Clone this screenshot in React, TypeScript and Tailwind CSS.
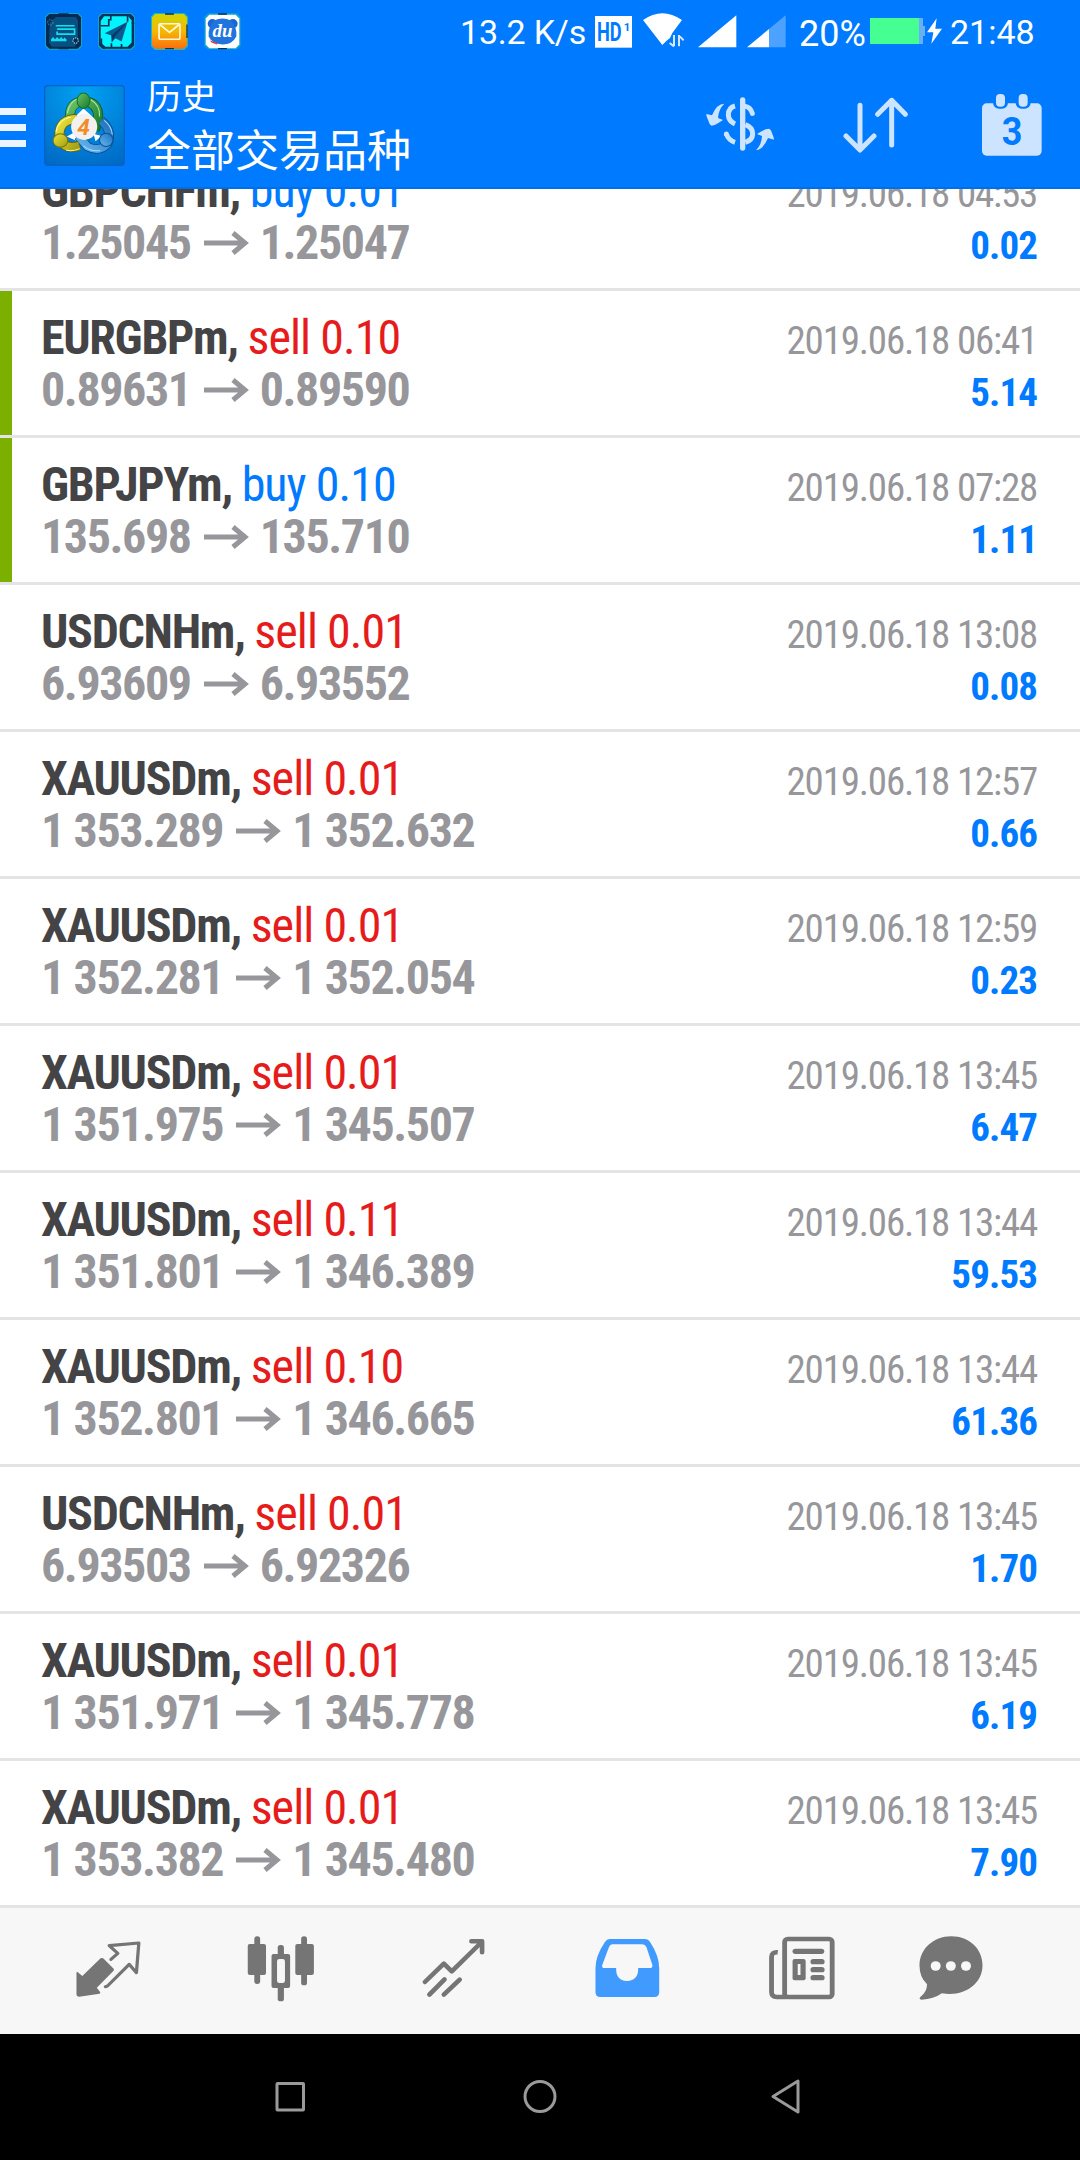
import React from 'react';

interface Deal {
  symbol: string;
  side: 'buy' | 'sell';
  volume: string;
  open: string;
  close: string;
  time: string;
  profit: string;
  marked?: boolean;
}

const DEALS: Deal[] = [
  { symbol: 'GBPCHFm', side: 'buy', volume: '0.01', open: '1.25045', close: '1.25047', time: '2019.06.18 04:53', profit: '0.02' },
  { symbol: 'EURGBPm', side: 'sell', volume: '0.10', open: '0.89631', close: '0.89590', time: '2019.06.18 06:41', profit: '5.14', marked: true },
  { symbol: 'GBPJPYm', side: 'buy', volume: '0.10', open: '135.698', close: '135.710', time: '2019.06.18 07:28', profit: '1.11', marked: true },
  { symbol: 'USDCNHm', side: 'sell', volume: '0.01', open: '6.93609', close: '6.93552', time: '2019.06.18 13:08', profit: '0.08' },
  { symbol: 'XAUUSDm', side: 'sell', volume: '0.01', open: '1 353.289', close: '1 352.632', time: '2019.06.18 12:57', profit: '0.66' },
  { symbol: 'XAUUSDm', side: 'sell', volume: '0.01', open: '1 352.281', close: '1 352.054', time: '2019.06.18 12:59', profit: '0.23' },
  { symbol: 'XAUUSDm', side: 'sell', volume: '0.01', open: '1 351.975', close: '1 345.507', time: '2019.06.18 13:45', profit: '6.47' },
  { symbol: 'XAUUSDm', side: 'sell', volume: '0.11', open: '1 351.801', close: '1 346.389', time: '2019.06.18 13:44', profit: '59.53' },
  { symbol: 'XAUUSDm', side: 'sell', volume: '0.10', open: '1 352.801', close: '1 346.665', time: '2019.06.18 13:44', profit: '61.36' },
  { symbol: 'USDCNHm', side: 'sell', volume: '0.01', open: '6.93503', close: '6.92326', time: '2019.06.18 13:45', profit: '1.70' },
  { symbol: 'XAUUSDm', side: 'sell', volume: '0.01', open: '1 351.971', close: '1 345.778', time: '2019.06.18 13:45', profit: '6.19' },
  { symbol: 'XAUUSDm', side: 'sell', volume: '0.01', open: '1 353.382', close: '1 345.480', time: '2019.06.18 13:45', profit: '7.90' },
];

const BADGE = 'M12 1H98L109 12V97L98 108H12L1 97V12Z';

const NotificationIcons = () => (
  <div className="flex gap-4">
    <svg className="size-[37px]" viewBox="0 0 110 110">
      <path d={BADGE} fill="#06294f" stroke="#10a5c8" strokeWidth="4" />
      <path d="M14 30L32 12H92L98 22V86L88 100H20L12 88Z" fill="#075082" />
      <path d="M40 4H70M40 105H70" stroke="#042b52" strokeWidth="6" />
      <path d="M32 38H88M36 48H88V63H36V55" stroke="#12e0ee" strokeWidth="5" fill="none" />
      <path d="M18 84V78l6-7 6 7 6-7 6 7 6-7 6 7 4-5 6 6v5Z" fill="#13dfee" />
      <circle cx="91" cy="82" r="8" fill="#042b52" stroke="#a5e6f0" strokeWidth="3" strokeDasharray="4 3" />
      <circle cx="16" cy="28" r="8" fill="none" stroke="#5fb4d0" strokeWidth="2" strokeDasharray="5 3" />
    </svg>
    <svg className="size-[37px]" viewBox="0 0 110 110">
      <path d={BADGE} fill="#06315c" stroke="#10a5c8" strokeWidth="4" />
      <path d="M18 10H90L100 22V88L88 100H22L8 88V24Z" fill="#04f4fc" />
      <path d="M38 4v16h-6v18H8M88 4v22M100 30h8M40 90v14M70 92v14M10 76v20l10 10" stroke="#06315c" strokeWidth="5" fill="none" />
      <path d="M88 26L20 60L40 67L41 87L52 75L70 85Z" fill="#0b5a90" />
      <path d="M88 26L40 67L41 87L50 70Z" fill="#063a69" />
    </svg>
    <svg className="size-[37px]" viewBox="0 0 110 110">
      <defs>
        <linearGradient id="mail" x1="0" y1="0" x2="0" y2="1">
          <stop offset="0" stopColor="#cfd600" />
          <stop offset="0.5" stopColor="#f6b800" />
          <stop offset="1" stopColor="#ff6a10" />
        </linearGradient>
      </defs>
      <path d={BADGE} fill="url(#mail)" stroke="#25b6b4" strokeWidth="4" />
      <path d="M42 3H68M42 106H68M107 34V74" stroke="#06315c" strokeWidth="4" />
      <rect x="24" y="32" width="62" height="46" rx="4" fill="none" stroke="#fff7e0" strokeWidth="5" />
      <path d="M27 35L55 58L83 35" fill="none" stroke="#fff7e0" strokeWidth="5" />
    </svg>
    <svg className="size-[37px]" viewBox="0 0 110 110">
      <path d={BADGE} fill="#10a5c8" />
      <path d="M16 5H94L105 16V94L94 105H16L5 94V16Z" fill="#fff" />
      <path d="M42 3H68M42 106H68" stroke="#06315c" strokeWidth="4" />
      <circle cx="25" cy="32" r="14" fill="#1d66cf" />
      <circle cx="86" cy="32" r="14" fill="#1d66cf" />
      <path d="M30 22Q55 10 80 22Q100 45 96 70Q84 94 55 94Q24 92 14 70Q10 45 30 22Z" fill="#2173dd" />
      <path d="M18 82L40 90L38 94L22 88Z" fill="#e33" />
      <text x="55" y="72" textAnchor="middle" fontSize="56" fontWeight="bold" fontStyle="italic" fontFamily="Liberation Serif, serif" fill="#fff">du</text>
    </svg>
  </div>
);

const StatusBar = () => (
  <div className="flex h-[62px] pt-[13px] pl-[45px]">
    <NotificationIcons />
    <div className="ml-[219px] w-[135px] text-[34px] leading-[38px] tracking-[-0.2px] whitespace-nowrap">13.2 K/s</div>
    <svg className="mt-[3px] h-[32px] w-[37px]" viewBox="0 0 111 96">
      <rect width="111" height="95" fill="#fff" />
      <text x="6" y="75" fontSize="76" fontWeight="bold" textLength="74" lengthAdjust="spacingAndGlyphs" fill="#007aff">HD</text>
      <text x="86" y="44" fontSize="34" fontWeight="bold" fill="#007aff">1</text>
    </svg>
    <svg className="ml-[11px] h-[36px] w-[41px]" viewBox="0 0 123 108">
      <path d="M0 21Q58 -20 117 21L88 60L81 75L70 84L58 96Z" fill="#fff" />
      <path d="M93 64V98M93 98L80 88M108 64V98M108 66L122 80" transform="translate(0 2)" fill="none" stroke="#d6e8ff" strokeWidth="6" />
    </svg>
    <svg className="mt-[2px] ml-[14px] h-[33px] w-[39px]" viewBox="0 0 117 99">
      <path d="M0 97L115 1V97Z" fill="#fff" />
    </svg>
    <svg className="mt-[2px] ml-[10px] h-[33px] w-[39px]" viewBox="0 0 117 99">
      <path d="M66 42L116 1V97H66Z" fill="#4da2ff" />
      <path d="M0 97L66 42V97Z" fill="#fff" />
    </svg>
    <div className="ml-[13px] w-[71px] text-[36px] leading-[42px] whitespace-nowrap">20%</div>
    <svg className="mt-[5px] h-[26px] w-[55px]" viewBox="0 0 55 26">
      <rect width="49" height="26" fill="#45ff93" />
      <path d="M49 0h4v8h2v10h-2v8h-4Z" fill="#6aaef5" />
    </svg>
    <svg className="mt-[5px] ml-[2px] h-[26px] w-[15px]" viewBox="0 0 45 78">
      <path d="M29 1L0 43H19L13 77L45 32H25Z" fill="#fff" />
    </svg>
    <div className="ml-[8px] text-[34px] leading-[38px] whitespace-nowrap">21:48</div>
  </div>
);

const AppLogo = () => (
  <svg className="size-[81px]" viewBox="132 256 242 242">
    <defs>
      <radialGradient id="tile" cx="0.5" cy="0.1" r="1">
        <stop offset="0" stopColor="#00a2f4" />
        <stop offset="1" stopColor="#0068c4" />
      </radialGradient>
      <linearGradient id="green" x1="0" y1="0" x2="1" y2="1">
        <stop offset="0" stopColor="#6cc468" />
        <stop offset="1" stopColor="#167a28" />
      </linearGradient>
      <linearGradient id="yellow" x1="0" y1="0" x2="1" y2="1">
        <stop offset="0" stopColor="#ebe43c" />
        <stop offset="1" stopColor="#a39c10" />
      </linearGradient>
      <linearGradient id="blue" x1="0" y1="1" x2="1" y2="0">
        <stop offset="0" stopColor="#6ab8f0" />
        <stop offset="1" stopColor="#1a70bc" />
      </linearGradient>
    </defs>
    <rect x="134" y="258" width="238" height="238" rx="10" fill="url(#tile)" stroke="#0a62c4" strokeWidth="4" />
    <path d="M156 262V492M180 262V492M204 262V492M228 262V492M276 262V492M300 262V492M324 262V492M348 262V492M138 290H368M138 320H368M138 350H368M138 405H368M138 435H368M138 465H368" stroke="#2a9ade" strokeOpacity="0.2" />
    {/* white gaps behind the three figures */}
    <path d="M226 350L250 326L276 350ZM200 410L222 398L232 424ZM280 402L304 408L286 424Z" fill="#fff" />
    <path d="M210 356Q206 308 250 304Q294 308 294 352L284 392" fill="none" stroke="#0f5c2a" strokeWidth="30" />
    <path d="M210 356Q206 308 250 304Q294 308 294 352L284 392" fill="none" stroke="url(#green)" strokeWidth="25" />
    <path d="M202 340Q208 306 232 298M272 300Q300 316 298 350" fill="none" stroke="#b4e6a8" strokeWidth="3" />
    <path d="M303 362Q338 392 322 432Q298 458 262 440L234 408" fill="none" stroke="#0a4c90" strokeWidth="28" />
    <path d="M303 362Q338 392 322 432Q298 458 262 440L234 408" fill="none" stroke="url(#blue)" strokeWidth="23" />
    <path d="M312 362Q334 380 336 404M300 452Q270 456 250 438" fill="none" stroke="#a8dcfa" strokeWidth="3" />
    <path d="M230 358Q176 358 178 408Q186 452 238 438" fill="none" stroke="#5f6414" strokeWidth="30" />
    <path d="M230 358Q176 358 178 408Q186 452 238 438" fill="none" stroke="url(#yellow)" strokeWidth="25" />
    <path d="M168 396Q174 360 212 352M198 450Q216 456 238 446" fill="none" stroke="#fdfbb0" strokeWidth="3" />
    <ellipse cx="250" cy="303" rx="19" ry="23" fill="url(#green)" stroke="#166f2b" strokeWidth="3" />
    <ellipse cx="181" cy="422" rx="22" ry="20" fill="url(#yellow)" stroke="#747510" strokeWidth="3" />
    <circle cx="318" cy="420" r="20" fill="url(#blue)" stroke="#0a5099" strokeWidth="3" />
    <circle cx="252" cy="381" r="39" fill="#f3f1ef" />
    <text x="250" y="405" textAnchor="middle" fontSize="68" fontWeight="bold" fontStyle="italic" fill="#f28c28">4</text>
  </svg>
);

const TitleBar = () => (
  <div className="flex h-[125px]">
    <div className="mt-[46px] flex w-[26px] flex-col gap-[9px]">
      <div className="h-[7px] bg-[#ebf4ff]" />
      <div className="h-[7px] bg-[#ebf4ff]" />
      <div className="h-[7px] bg-[#ebf4ff]" />
    </div>
    <div className="mt-[23px] ml-[18px]">
      <AppLogo />
    </div>
    <div className="ml-[22px] w-[559px] pt-[10px] font-['Noto_Sans_CJK_SC',sans-serif] whitespace-nowrap">
      <div className="text-[34.5px] leading-[44px]">历史</div>
      <div className="mt-1 text-[44px] leading-[56px]">全部交易品种</div>
    </div>
    <svg className="mt-[35px] h-[54px] w-[69px]" viewBox="798 292 207 162">
      <g fill="none" stroke="#cce4ff" strokeWidth="15" strokeLinecap="round">
        <path d="M908 301V445" strokeWidth="16" />
        <path d="M885 319Q865 324 865 346Q866 364 885 373" strokeLinecap="butt" />
        <path d="M916 320Q932 323 937 341" />
        <path d="M859 403Q866 422 885 428" strokeLinecap="butt" />
        <path d="M916 375Q938 383 938 403Q937 422 916 428" strokeLinecap="butt" />
      </g>
      <circle cx="859" cy="403" r="7.500" fill="#cce4ff" />
      <path d="M853 312Q830 312 816 347L799 343Q798 348 805 363Q808 374 814 378Q824 378 835 370L849 361L834 355Q836 328 853 312Z" fill="#cce4ff" />
      <path d="M948 452Q971 448 984 415L1002 420Q1002 414 996 400Q994 391 988 387Q976 387 965 395L951 403L966 409Q965 435 948 452Z" fill="#cce4ff" />
    </svg>
    <svg className="mt-[35px] ml-[68px] h-[57px] w-[66px]" viewBox="250 292 198 171">
      <path d="M301 317V450M259 409L301 451L343 409M396 436V302M354 344L396 302L437 344" fill="none" stroke="#cce4ff" strokeWidth="15" strokeLinecap="round" strokeLinejoin="round" />
    </svg>
    <svg className="mt-[32px] ml-[73px] h-[62px] w-[60px]" viewBox="667 282 180 186">
      <rect x="667" y="310" width="179" height="157" rx="14" fill="#cce4ff" />
      <rect x="700" y="270" width="45" height="56" rx="18" fill="#007aff" />
      <rect x="768" y="270" width="45" height="56" rx="18" fill="#007aff" />
      <rect x="709" y="282" width="27" height="38" rx="12" fill="#cce4ff" />
      <rect x="777" y="282" width="27" height="38" rx="12" fill="#cce4ff" />
      <text x="726" y="435" fontSize="116" fontWeight="bold" textLength="62" lengthAdjust="spacingAndGlyphs" fill="#007aff">3</text>
    </svg>
  </div>
);

const DealRow = ({ deal }: { deal: Deal }) => (
  <div className="flex h-[147px] shrink-0 border-b-[3px] border-[#e4e4e4]">
    <div className={deal.marked ? 'w-3 bg-[#7cb000]' : 'w-3'} />
    <div className="flex flex-1 justify-between pr-[43px] pl-[29px] whitespace-nowrap">
      <div className="pt-[21px] text-[48px] leading-[52px]">
        <div className="text-[#444446]">
          <span className="font-bold tracking-[-1.3px]">{deal.symbol}, </span>
          <span className={deal.side === 'buy' ? 'tracking-[-0.95px] text-[#007aff]' : 'tracking-[-0.95px] text-[#e61c1c]'}>
            {deal.side} {deal.volume}
          </span>
        </div>
        <div className="flex items-center font-bold tracking-[-1.4px] text-[#97979b]">
          {deal.open}
          <svg className="mr-[11px] ml-[13px] h-[24px] w-[45px]" viewBox="0 0 45 24">
            <path d="M0 12H41M29 2L41 12L29 22" fill="none" stroke="#97979b" strokeWidth="5" />
          </svg>
          {deal.close}
        </div>
      </div>
      <div className="pt-[24px] text-right text-[39px] leading-[52px]">
        <div className="tracking-[-1.2px] text-[#97979b]">{deal.time}</div>
        <div className="font-bold tracking-[-0.9px] text-[#007aff]">{deal.profit}</div>
      </div>
    </div>
  </div>
);

const TAB_ICON = 'h-[72px] w-[72px]';

const TabBar = () => (
  <div className="flex h-[126px] bg-[#f7f7f7] pt-[26px] pl-[21px] text-[#757575]">
    <div className="flex w-[173px] justify-center">
      <svg className={TAB_ICON} viewBox="209 132 209 216" preserveAspectRatio="none">
        <path d="M225 246L239 258L292 205Q297 202 301 206L330 236Q332 240 329 243L281 293L290 305Q293 310 289 311L230 320Q222 320 222 313V248Q222 245 225 246Z" fill="currentColor" />
        <path d="M322 208L342 190L317 167L403 159L396 248L375 223L312 288L306 290" fill="none" stroke="currentColor" strokeWidth="9.500" strokeLinecap="round" strokeLinejoin="round" />
      </svg>
    </div>
    <div className="flex w-[173px] justify-center">
      <svg className={TAB_ICON} viewBox="711 132 209 216" preserveAspectRatio="none" fill="currentColor">
        <rect x="738" y="139" width="17" height="143" rx="8" />
        <rect x="719" y="162" width="53" height="93" rx="6" />
        <rect x="874" y="139" width="17" height="147" rx="8" />
        <rect x="857" y="162" width="54" height="93" rx="6" />
        <rect x="806" y="165" width="18" height="60" rx="8" />
        <rect x="806" y="280" width="18" height="54" rx="8" />
        <rect x="788" y="192" width="54" height="102" rx="6" />
        <rect x="804" y="207" width="23" height="72" rx="7" fill="#f7f7f7" />
      </svg>
    </div>
    <div className="flex w-[173px] justify-center">
      <svg className={TAB_ICON} viewBox="1214 132 209 216" preserveAspectRatio="none">
        <path d="M1234 276L1289 221L1312 244L1396 159M1369 154H1400V187M1247 314L1291 268M1289 314L1335 269" fill="none" stroke="currentColor" strokeWidth="13.500" strokeLinecap="round" strokeLinejoin="round" />
      </svg>
    </div>
    <div className="flex w-[173px] justify-center">
      <svg className={TAB_ICON} viewBox="148 132 209 216" preserveAspectRatio="none">
        <path d="M202 147H306Q314 147 320 157Q346 198 346 235V307Q346 321 332 321H175Q161 321 161 307V235Q161 198 188 157Q194 147 202 147Z" fill="#419bff" />
        <path d="M210 163H296Q305 163 309 172L326 224Q328 234 318 234H285Q286 272 252 273Q220 272 221 234H187Q178 234 181 224L200 172Q203 163 210 163Z" fill="#f7f7f7" />
      </svg>
    </div>
    <div className="flex w-[176px] justify-center">
      <svg className={TAB_ICON} viewBox="653 132 209 216" preserveAspectRatio="none">
        <g fill="none" stroke="currentColor" strokeWidth="14">
          <rect x="710" y="147" width="138" height="174" rx="9" />
          <path d="M690 187Q672 185 672 202V306Q672 321 687 321H715" />
        </g>
        <g fill="currentColor">
          <rect x="733" y="176" width="92" height="16" rx="8" />
          <rect x="785" y="207" width="41" height="16" rx="8" />
          <rect x="785" y="231" width="41" height="16" rx="8" />
          <rect x="785" y="255" width="41" height="16" rx="8" />
          <rect x="733" y="207" width="38" height="64" rx="6" />
          <rect x="748" y="222" width="8" height="33" fill="#f7f7f7" />
        </g>
      </svg>
    </div>
    <div className="flex w-[124px] justify-center">
      <svg className={TAB_ICON} viewBox="1089 132 209 216" preserveAspectRatio="none">
        <path d="M1194 139C1248 139 1285 178 1285 226C1285 282 1232 322 1167 310Q1143 328 1108 329Q1099 328 1104 322Q1124 306 1124 283Q1102 262 1102 226C1102 178 1142 139 1194 139Z" fill="currentColor" />
        <g fill="#f7f7f7">
          <circle cx="1149" cy="228" r="14.500" />
          <circle cx="1193" cy="228" r="14.500" />
          <circle cx="1237" cy="228" r="14.500" />
        </g>
      </svg>
    </div>
  </div>
);

const NavBar = () => (
  <div className="flex h-[126px] bg-black pt-[42px] pl-[272px]">
    <svg className="size-[40px]" viewBox="0 0 40 40">
      <rect x="5" y="7.500" width="26.500" height="26.500" rx="0.500" fill="none" stroke="#9a9a9a" strokeWidth="3" />
    </svg>
    <svg className="ml-[208px] size-[40px]" viewBox="0 0 40 40">
      <circle cx="20" cy="20.500" r="15" fill="none" stroke="#9a9a9a" strokeWidth="3" />
    </svg>
    <svg className="ml-[205px] size-[40px]" viewBox="0 0 40 40">
      <path d="M8 20.500L33 5V36Z" fill="none" stroke="#9a9a9a" strokeWidth="3" strokeLinejoin="round" />
    </svg>
  </div>
);

export default function App() {
  return (
    <div className="flex h-[2160px] w-[1080px] flex-col overflow-hidden bg-white font-[Roboto,sans-serif]">
      <div className="h-[189px] shrink-0 border-b-2 border-[#006fe8] bg-[#007aff] text-white">
        <StatusBar />
        <TitleBar />
      </div>
      {/* the list is scrolled, so the first deal is cut by the header */}
      <div className="flex h-[1719px] shrink-0 flex-col justify-end overflow-hidden font-['Roboto_Condensed',Roboto,sans-serif] [font-stretch:75%]">
        {DEALS.map((deal, i) => (
          <DealRow key={i} deal={deal} />
        ))}
      </div>
      <TabBar />
      <NavBar />
    </div>
  );
}
